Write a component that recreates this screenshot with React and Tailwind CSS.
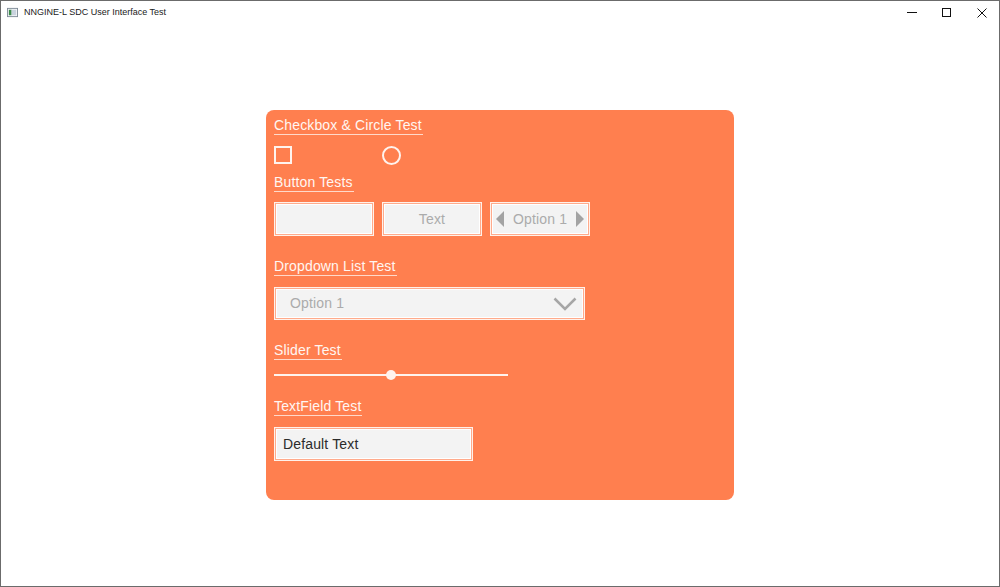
import { useState } from "react";

const font = { fontFamily: '"Liberation Sans", Arial, sans-serif' };

function Label({ children, className = "" }) {
  return (
    <div className={`flex ${className}`}>
      <span className="text-[14px] tracking-[0.15px] leading-[18px] text-[#fff6f2] border-b border-[#ffd9ca] pr-px">
        {children}
      </span>
    </div>
  );
}

function Box({ className = "", children }) {
  // white outline, salmon gap, white inner line, light grey fill
  return (
    <div className={`border border-[#fff1ea] bg-[#ffab8c] p-px ${className}`}>
      <div className="h-full w-full border border-white bg-[#f3f3f3] flex items-center">
        {children}
      </div>
    </div>
  );
}

export default function App() {
  const [checked, setChecked] = useState(false);

  return (
    <div
      className="w-[1000px] h-[587px] bg-white border border-[#6b6b6b] flex flex-col overflow-hidden"
      style={font}>
      {/* title bar */}
      <div className="h-[23px] shrink-0 flex items-center">
        <svg width="11" height="11" viewBox="0 0 12 12" className="ml-[6px] mr-[6px]">
          <rect x="0.5" y="1.5" width="11" height="9" fill="#f4f6f8" stroke="#7d8a96" />
          <rect x="2" y="3" width="3" height="6" fill="#3b8a4b" />
          <rect x="5" y="3" width="5" height="6" fill="#c9d3de" />
        </svg>
        <span className="text-[9px] text-[#1a1a1a]">
          NNGINE-L SDC User Interface Test
        </span>
        <div className="ml-auto flex h-full">
          <div className="w-[35px] flex items-center justify-center">
            <div className="w-[10px] h-px bg-[#111]" />
          </div>
          <div className="w-[35px] flex items-center justify-center">
            <div className="w-[9px] h-[9px] border border-[#111]" />
          </div>
          <div className="w-[35px] flex items-center justify-center">
            <svg width="10" height="10" viewBox="0 0 10 10">
              <path d="M0.5 0.5L9.5 9.5M9.5 0.5L0.5 9.5" stroke="#111" strokeWidth="1" />
            </svg>
          </div>
        </div>
      </div>

      {/* content */}
      <div className="flex-1">
        <div className="ml-[265px] mt-[86px] w-[468px] h-[390px] bg-[#ff7f4f] rounded-[8px] px-[8px] pt-[6px] flex flex-col">
          <Label>Checkbox &amp; Circle Test</Label>

          <div className="mt-[11px] flex items-center h-[18px]">
            <button
              onClick={() => setChecked(!checked)}
              className="w-[18px] h-[18px] border-2 border-[#fff3ee]"
            />
            <div className="ml-[90px] w-[19px] h-[19px] rounded-full border-2 border-[#fff3ee]" />
          </div>

          <Label className="mt-[9px]">Button Tests</Label>

          <div className="mt-[10px] flex gap-[8px]">
            <Box className="w-[100px] h-[34px]" />
            <Box className="w-[100px] h-[34px]">
              <span className="w-full text-center text-[14px] tracking-[0.15px] text-[#ababab]">Text</span>
            </Box>
            <Box className="w-[100px] h-[34px]">
              <div className="w-full flex items-center justify-between px-[3px]">
                <svg width="9" height="16" viewBox="0 0 9 16">
                  <path d="M8 0L0 8L8 16Z" fill="#a3a3a3" />
                </svg>
                <span className="text-[14px] tracking-[0.15px] text-[#ababab]">Option 1</span>
                <svg width="9" height="16" viewBox="0 0 9 16">
                  <path d="M1 0L9 8L1 16Z" fill="#a3a3a3" />
                </svg>
              </div>
            </Box>
          </div>

          <Label className="mt-[21px]">Dropdown List Test</Label>

          <Box className="mt-[11px] w-[311px] h-[33px]">
            <div className="w-full flex items-center justify-between pl-[13px] pr-[5px]">
              <span className="text-[14px] tracking-[0.15px] text-[#ababab]">Option 1</span>
              <svg width="24" height="14" viewBox="0 0 24 14">
                <path d="M1.5 1.5L12 12L22.5 1.5" fill="none" stroke="#a6a6a6" strokeWidth="2.5" />
              </svg>
            </div>
          </Box>

          <Label className="mt-[21px]">Slider Test</Label>

          <div className="mt-[10px] w-[234px] h-[10px] relative flex items-center">
            <div className="w-full h-[2px] bg-[#fff3ee]" />
            <div className="absolute left-[112px] top-0 w-[10px] h-[10px] rounded-full bg-[#fff3ee]" />
          </div>

          <Label className="mt-[17px]">TextField Test</Label>

          <Box className="mt-[11px] w-[199px] h-[34px]">
            <span className="pl-[6px] text-[14px] tracking-[0.15px] text-[#2b2b2b]">Default Text</span>
          </Box>
        </div>
      </div>
    </div>
  );
}
